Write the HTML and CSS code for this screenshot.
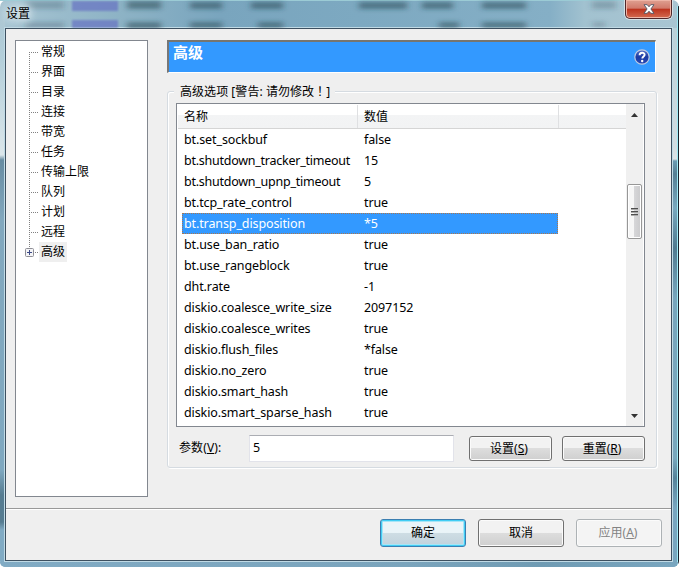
FILE: index.html
```html
<!DOCTYPE html>
<html lang="zh-CN">
<head>
<meta charset="utf-8">
<title>设置</title>
<link rel="stylesheet" href="styles.css">
</head>
<body>
<div class="window">
  <header class="titlebar">
    <svg class="glass" width="679" height="28" viewBox="0 0 679 28" aria-hidden="true">
      <defs><filter id="soft" x="-20%" y="-50%" width="140%" height="200%"><feGaussianBlur stdDeviation="3 2"/></filter><filter id="edge"><feGaussianBlur stdDeviation="1.2"/></filter></defs>
      <path filter="url(#edge)" fill="#6672c3" opacity=".7" d="M72 1h46v10H72zM72 20h46v8H72z"/>
      <g filter="url(#soft)">
        <path fill="#253f4c" opacity=".5" d="M127 1h34v8h-34zM127 22h34v7h-34zM190 2h32v7h-32zM190 22h32v6h-32zM251 2h32v7h-32zM258 22h25v6h-25zM359 2h48v7h-48zM422 2h31v7h-31zM482 2h44v7h-44zM439 22h20v6h-20zM482 22h44v6h-44z"/>
        <path fill="#253f4c" opacity=".25" d="M25 1h39v8H25zM25 22h39v6H25zM592 1h24v8h-24zM593 22h12v5h-12z"/>
      </g>
    </svg>
    <h1 class="title">设置</h1>
    <button class="close" aria-label="关闭"><svg width="12" height="10" viewBox="0 0 12 10"><path d="M1 .7h3.2L6 2.8 7.800.7H11L7.900 5 11 9.300H7.800L6 7.200 4.200 9.300H1L4.100 5z" fill="#fff" stroke="#4e5665" stroke-width=".9"/></svg></button>
  </header>
  <main class="client">
    <section class="upper">
      <nav class="tree">
        <ul>
          <li><span>常规</span></li>
          <li><span>界面</span></li>
          <li><span>目录</span></li>
          <li><span>连接</span></li>
          <li><span>带宽</span></li>
          <li><span>任务</span></li>
          <li><span>传输上限</span></li>
          <li><span>队列</span></li>
          <li><span>计划</span></li>
          <li><span>远程</span></li>
          <li class="current"><svg class="plus" width="9" height="9" viewBox="0 0 9 9"><rect x=".5" y=".5" width="8" height="8" rx="1" fill="#f4f4f6" stroke="#8e8e96"/><path d="M2 4.500h5M4.500 2v5" stroke="#3c4a86"/></svg><span>高级</span></li>
        </ul>
      </nav>
      <div class="page">
        <div class="banner">
          <h2>高级</h2>
          <svg class="help" width="16" height="16" viewBox="0 0 16 16"><defs><linearGradient id="ball" x2="0" y2="1"><stop stop-color="#5873c8"/><stop offset=".5" stop-color="#1b3aa4"/><stop offset="1" stop-color="#2949b5"/></linearGradient></defs><circle cx="8" cy="8" r="7.200" fill="url(#ball)" stroke="#c1cbe0" stroke-width="1.200"/><path d="M5.600 6.200C5.600 3 10.600 3 10.600 5.800 10.600 7.500 8.300 7.500 8.300 9.500" fill="none" stroke="#fff" stroke-width="1.900"/><circle cx="8.200" cy="12" r="1.200" fill="#fff"/></svg>
        </div>
        <div class="group">
          <div class="legend">高级选项 [警告: 请勿修改<span class="mark" lang="zh-TW">！</span>]</div>
          <div class="list">
            <div class="table">
              <div class="head"><span>名称</span><span>数值</span></div>
              <div class="row"><span>bt.set_sockbuf</span><span>false</span></div>
              <div class="row long"><span>bt.shutdown_tracker_timeout</span><span>15</span></div>
              <div class="row long"><span>bt.shutdown_upnp_timeout</span><span>5</span></div>
              <div class="row"><span>bt.tcp_rate_control</span><span>true</span></div>
              <div class="row selected"><span>bt.transp_disposition</span><span>*5</span></div>
              <div class="row"><span>bt.use_ban_ratio</span><span>true</span></div>
              <div class="row"><span>bt.use_rangeblock</span><span>true</span></div>
              <div class="row"><span>dht.rate</span><span>-1</span></div>
              <div class="row"><span>diskio.coalesce_write_size</span><span>2097152</span></div>
              <div class="row"><span>diskio.coalesce_writes</span><span>true</span></div>
              <div class="row"><span>diskio.flush_files</span><span>*false</span></div>
              <div class="row"><span>diskio.no_zero</span><span>true</span></div>
              <div class="row"><span>diskio.smart_hash</span><span>true</span></div>
              <div class="row"><span>diskio.smart_sparse_hash</span><span>true</span></div>
            </div>
            <div class="scroll">
              <svg width="7" height="4" viewBox="0 0 7 4"><path d="M0 4 3.500 0 7 4z" fill="#333"/></svg>
              <div class="thumb"><i></i><i></i><i></i></div>
              <svg width="7" height="4" viewBox="0 0 7 4"><path d="M0 0h7L3.500 4z" fill="#333"/></svg>
            </div>
          </div>
          <div class="edit">
            <label>参数(<u>V</u>):</label>
            <div class="field">5</div>
            <button class="btn small">设置(<u>S</u>)</button>
            <button class="btn small">重置(<u>R</u>)</button>
          </div>
        </div>
      </div>
    </section>
    <footer class="actions">
      <button class="btn primary">确定</button>
      <button class="btn">取消</button>
      <button class="btn disabled">应用(<u>A</u>)</button>
    </footer>
  </main>
</div>
</body>
</html>
```
FILE: styles.css
```css
* { box-sizing: border-box; }
body { margin: 0; overflow: hidden; color: #000; font: 12px/20px "Noto Sans", "Noto Sans CJK SC", sans-serif; }
h1, h2, ul { margin: 0; padding: 0; font-weight: normal; }
button { font: inherit; color: inherit; margin: 0; padding: 0; }
.window {
  width: 679px; height: 567px; display: flex; flex-direction: column;
  padding: 0 7px 6px 5px; position: relative;
  border-radius: 7px 7px 6px 6px;
  background:
    linear-gradient(#17212b, #17212b) right 0 top 6px / 1px 100% no-repeat,
    linear-gradient(#9feaf5, #9feaf5) right 1px top 6px / 1px 100% no-repeat,
    linear-gradient(#b9d0d8 0, #d2dde2 120px, #dce3e6 131px, #6b9bb2 133px, #557f94 146px, #79a8be 180px, #507a90 220px, #78a6bd 270px, #79a7bd 430px, #56839a 450px, #79a6bf 480px) right 0 top 28px / 8px 100% no-repeat,
    linear-gradient(#a9c4d1 0, #b4cfda 60px, #dbe6ea 155px, #678ca2 160px, #82a8be 220px, #7fa8c0 470px, #567c91 495px, #567c91 522px, #81abc4 530px) left 0 top 0 / 5px 100% no-repeat,
    linear-gradient(90deg, #a7c5d3 0, #8fb4c6 110px, #79a5be 220px, #7da9c1 360px, #85afc6 550px, #a2c2d0 585px, #a9c5d2 679px);
}
.window::after { content: ""; order: 3; flex: none; height: 5px; margin: 1px -6px 0 -5px; background: linear-gradient(90deg, #81abc4, #7aa4bc 60%, #6f9bb3 80%, #79a6bf); border-radius: 0 0 5px 5px; }
.titlebar { height: 28px; flex: none; display: flex; justify-content: space-between; margin: 0 0 0 -5px; padding: 0 2px 0 6px; box-shadow: inset 0 1px #9bcbd5; }
.glass { position: absolute; left: 0; top: 0; }
.title { position: relative; font-size: 12px; line-height: 28px; text-shadow: 0 0 7px #e5eef2, 0 0 9px #e5eef2, 0 0 12px #e5eef2; }
.close {
  position: relative; width: 47px; height: 19px; margin-right: -2px; display: grid; place-items: center;
  border: 1px solid #50272a; border-top: 0; border-radius: 0 0 5px 5px;
  background: linear-gradient(#dfa091 0, #d1796a 46%, #bc321d 50%, #d46b50 100%);
  box-shadow: inset 0 0 0 1px #eeb5a7, 0 0 0 1px #d5e2e7;
}
.client { width: 667px; height: 533px; flex: none; border: 1px solid #3d5060; background: #efefef; box-shadow: 0 0 0 1px #c0dae5; display: flex; flex-direction: column; }
.upper { height: 480px; display: flex; padding: 11px 0 0 9px; gap: 19px; border-bottom: 1px solid #999; }
.tree { width: 133px; height: 457px; background: #fff; border: 1px solid #82878f; padding: 1px 0 0 13px; }
.tree ul { list-style: none; background: repeating-linear-gradient(#808080 0 1px, transparent 1px 2px) 0 10px / 1px 198px no-repeat; }
.tree li { height: 20px; display: flex; align-items: center; position: relative; }
.tree li::before { content: ""; width: 9px; height: 1px; margin-right: 1px; background: repeating-linear-gradient(90deg, #808080 0 1px, transparent 1px 2px); }
.tree span { padding: 0 2px; line-height: 20px; }
.tree .current span { background: #efefef; }
.plus { position: absolute; left: -4px; top: 6px; }
.page { width: 490px; display: flex; flex-direction: column; }
.banner { width: 489px; height: 33px; background: #3399ff; border: 1px solid #fff; border-top: 2px solid #77756f; border-left: 2px solid #777; display: flex; justify-content: space-between; padding: 0 5px 0 4px; color: #fff; }
.banner h2 { font-size: 15px; font-weight: 700; line-height: 21px; }
.help { margin-top: 7px; }
.group { height: 377px; margin-top: 18px; border: 1px solid #d5dbe1; border-radius: 3px; box-shadow: inset 1px 1px #fff, 1px 1px #fff; padding: 0 8px; display: flex; flex-direction: column; }
.legend { align-self: flex-start; height: 20px; margin: -11px 0 2px -2px; padding: 0 5px 0 6px; background: #efefef; letter-spacing: .05px; }
.mark { font-family: "Noto Sans CJK TC", sans-serif; }
.list { width: 469px; height: 324px; border: 1px solid #82878f; background: #fff; display: flex; justify-content: space-between; padding-right: 1px; }
.table { width: 450px; padding: 1px 0 0 1px; }
.head { height: 24px; display: grid; grid-template-columns: 180px 201px 1fr; border-bottom: 1px solid #d5d5d5; background: linear-gradient(#fff 42%, #f3f4f5 43%, #f2f3f4); line-height: 23px; }
.head span { border-right: 1px solid #dfe0e2; padding-left: 6px; }
.row { height: 21px; width: 376px; margin-left: 4px; display: grid; grid-template-columns: 180px 1fr; line-height: 21px; font-size: 12.500px; letter-spacing: -.11px; white-space: nowrap; }
.row span { padding-left: 2px; }
.row.long { letter-spacing: -.25px; }
.row.selected { background: #3399ff; color: #fff; outline: 1px dotted #aa764d; outline-offset: -1px; }
.scroll { width: 17px; background: #f0f0f0; display: grid; grid-template-rows: 4px 1fr 4px; justify-items: center; padding: 9px 1px 8px 0; }
.thumb { width: 15px; height: 55px; margin-top: 67px; border: 1px solid #979797; border-radius: 2px; background: linear-gradient(90deg, #f6f6f6 0 45%, #d6d6d8 50%, #cacacc); box-shadow: inset 0 0 0 1px #fff; display: flex; flex-direction: column; justify-content: center; align-items: center; gap: 1px; }
.thumb i { width: 7px; height: 2px; background: linear-gradient(#4f4f4f 50%, #aaa 50%); }
.edit { display: flex; margin-top: 8px; }
.edit label { width: 73px; padding: 3px 0 0 3px; line-height: 20px; letter-spacing: .1px; }
.field { width: 205px; height: 27px; border: 1px solid #e2e3ea; border-top-color: #abadb3; background: #fff; padding: 0 0 0 3px; line-height: 23px; font-size: 12.500px; }
.btn { width: 86px; height: 28px; border: 1px solid #707070; border-radius: 3px; background: linear-gradient(#f2f2f2 48%, #dddddd 50%, #cfcfcf); box-shadow: inset 0 0 0 1px #fbfbfb; line-height: 24px; }
.small { width: 83px; height: 25px; margin: 1px 0 0 15px; padding-right: 3px; line-height: 22px; }
.small + .small { margin-left: 10px; }
.primary { border-color: #3c7fb1; box-shadow: inset 0 0 0 1px #41cdf4, inset 0 0 0 2px #a6e5f7; background: linear-gradient(#eaf4f8 48%, #cedde4 50%, #c1d2dc); }
.disabled { border-color: #adb2b5; background: #f4f4f4; color: #838383; padding-right: 2px; }
.actions { display: flex; justify-content: flex-end; gap: 12px; height: 51px; padding: 9px 9px 0 0; border-top: 1px solid #fff; }
```
